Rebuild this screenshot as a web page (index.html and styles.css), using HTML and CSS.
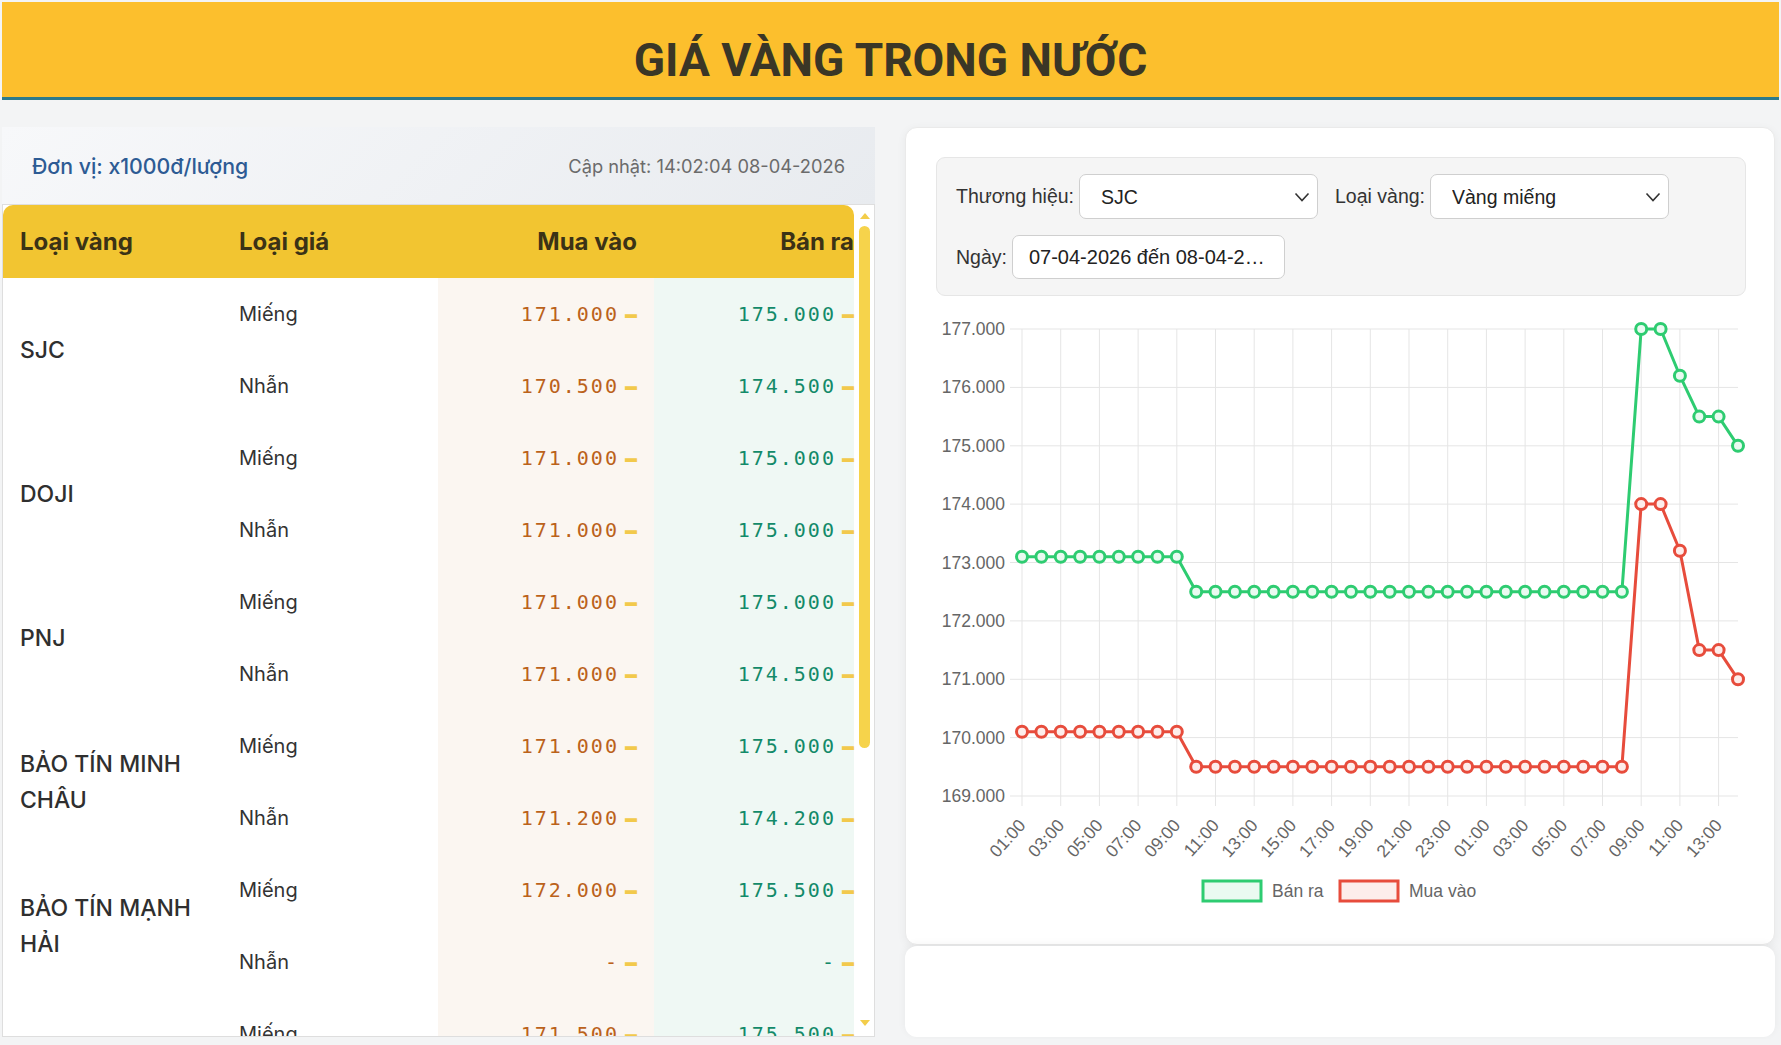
FILE: index.html
```html
<!DOCTYPE html>
<html lang="vi">
<head>
    <meta charset="UTF-8">
    <meta name="viewport" content="width=device-width, initial-scale=1.0">
    <title>Giá vàng trong nước</title>
    <link rel="stylesheet" href="styles.css">
</head>
<body>

<header class="site-header">
    <h1>GIÁ VÀNG TRONG NƯỚC</h1>
</header>

<main class="layout">
    <section class="price-panel">
        <div class="panel-top">
            <span class="unit">Đơn vị: x1000đ/lượng</span>
            <span class="updated">Cập nhật: 14:02:04 08-04-2026</span>
        </div>
        <div class="table-wrap">
            <div class="table-scroll">
                <table class="price-table">
                    <thead>
                        <tr>
                            <th class="col-brand">Loại vàng</th>
                            <th class="col-type">Loại giá</th>
                            <th class="col-buy">Mua vào</th>
                            <th class="col-sell">Bán ra</th>
                        </tr>
                    </thead>
                    <tbody>
                        <tr>
                            <td class="brand" rowspan="2">SJC</td>
                            <td>Miếng</td>
                            <td class="buy"><span class="num">171.000</span><span class="trend">–</span></td>
                            <td class="sell"><span class="num">175.000</span><span class="trend">–</span></td>
                        </tr>
                        <tr>
                            <td>Nhẫn</td>
                            <td class="buy"><span class="num">170.500</span><span class="trend">–</span></td>
                            <td class="sell"><span class="num">174.500</span><span class="trend">–</span></td>
                        </tr>
                        <tr>
                            <td class="brand" rowspan="2">DOJI</td>
                            <td>Miếng</td>
                            <td class="buy"><span class="num">171.000</span><span class="trend">–</span></td>
                            <td class="sell"><span class="num">175.000</span><span class="trend">–</span></td>
                        </tr>
                        <tr>
                            <td>Nhẫn</td>
                            <td class="buy"><span class="num">171.000</span><span class="trend">–</span></td>
                            <td class="sell"><span class="num">175.000</span><span class="trend">–</span></td>
                        </tr>
                        <tr>
                            <td class="brand" rowspan="2">PNJ</td>
                            <td>Miếng</td>
                            <td class="buy"><span class="num">171.000</span><span class="trend">–</span></td>
                            <td class="sell"><span class="num">175.000</span><span class="trend">–</span></td>
                        </tr>
                        <tr>
                            <td>Nhẫn</td>
                            <td class="buy"><span class="num">171.000</span><span class="trend">–</span></td>
                            <td class="sell"><span class="num">174.500</span><span class="trend">–</span></td>
                        </tr>
                        <tr>
                            <td class="brand" rowspan="2">BẢO TÍN MINH CHÂU</td>
                            <td>Miếng</td>
                            <td class="buy"><span class="num">171.000</span><span class="trend">–</span></td>
                            <td class="sell"><span class="num">175.000</span><span class="trend">–</span></td>
                        </tr>
                        <tr>
                            <td>Nhẫn</td>
                            <td class="buy"><span class="num">171.200</span><span class="trend">–</span></td>
                            <td class="sell"><span class="num">174.200</span><span class="trend">–</span></td>
                        </tr>
                        <tr>
                            <td class="brand" rowspan="2">BẢO TÍN MẠNH HẢI</td>
                            <td>Miếng</td>
                            <td class="buy"><span class="num">172.000</span><span class="trend">–</span></td>
                            <td class="sell"><span class="num">175.500</span><span class="trend">–</span></td>
                        </tr>
                        <tr>
                            <td>Nhẫn</td>
                            <td class="buy"><span class="num">-</span><span class="trend">–</span></td>
                            <td class="sell"><span class="num">-</span><span class="trend">–</span></td>
                        </tr>
                        <tr>
                            <td class="brand" rowspan="2">PHÚ QUÝ</td>
                            <td>Miếng</td>
                            <td class="buy"><span class="num">171.500</span><span class="trend">–</span></td>
                            <td class="sell"><span class="num">175.500</span><span class="trend">–</span></td>
                        </tr>
                        <tr>
                            <td>Nhẫn</td>
                            <td class="buy"><span class="num">171.000</span><span class="trend">–</span></td>
                            <td class="sell"><span class="num">174.500</span><span class="trend">–</span></td>
                        </tr>
                    </tbody>
                </table>
            </div>
            <div class="scrollbar">
                <span class="arrow-up"></span>
                <span class="scroll-track"><span class="scroll-thumb"></span></span>
                <span class="arrow-down"></span>
            </div>
        </div>
    </section>

    <section class="chart-column">
        <div class="chart-card">
            <div class="filters">
                <label class="field">
                    <span>Thương hiệu:</span>
                    <span class="select-box">
                        <select>
                            <option>SJC</option>
                            <option>DOJI</option>
                            <option>PNJ</option>
                        </select>
                        <svg width="16" height="10" viewBox="0 0 16 10"><path d="M1.5 1.5 L8 8.5 L14.5 1.5" fill="none" stroke="#333" stroke-width="1.6"/></svg>
                    </span>
                </label>
                <label class="field">
                    <span>Loại vàng:</span>
                    <span class="select-box">
                        <select>
                            <option>Vàng miếng</option>
                            <option>Vàng nhẫn</option>
                        </select>
                        <svg width="16" height="10" viewBox="0 0 16 10"><path d="M1.5 1.5 L8 8.5 L14.5 1.5" fill="none" stroke="#333" stroke-width="1.6"/></svg>
                    </span>
                </label>
                <label class="field">
                    <span>Ngày:</span>
                    <input class="date-input" type="text" value="07-04-2026 đến 08-04-2026" readonly>
                </label>
            </div>
            <svg id="priceChart" class="chart" width="810" height="610" viewBox="0 0 810 610"></svg>
        </div>
        <div class="extra-card"></div>
    </section>
</main>

<script>
    // hourly points, labels every second hour like the chart lib does
    const labels = [];
    for (let i = 0; i < 38; i++) {
        labels.push(String((i + 1) % 24).padStart(2, '0') + ':00');
    }
    const banRa = Array(9).fill(173.1).concat(Array(23).fill(172.5), [177, 177, 176.2, 175.5, 175.5, 175]);
    const muaVao = Array(9).fill(170.1).concat(Array(23).fill(169.5), [174, 174, 173.2, 171.5, 171.5, 171]);

    const chart = document.getElementById('priceChart');
    const plotLeft = 86, plotRight = 802, plotTop = 24, plotBottom = 491;
    const stepX = (plotRight - plotLeft) / (labels.length - 1);
    const unitY = (plotBottom - plotTop) / 8;
    const xAt = i => (plotLeft + i * stepX).toFixed(1);
    const yAt = v => (plotTop + (177 - v) * unitY).toFixed(1);

    let html = '';
    for (let v = 169; v <= 177; v++) {
        html += `<line class="grid" x1="74" y1="${yAt(v)}" x2="${plotRight}" y2="${yAt(v)}"/>`;
        html += `<text class="tick" x="69" y="${yAt(v)}" text-anchor="end" dominant-baseline="central">${v}.000</text>`;
    }
    labels.forEach((label, i) => {
        if (i % 2) return;
        html += `<line class="grid" x1="${xAt(i)}" y1="${plotTop}" x2="${xAt(i)}" y2="${plotBottom + 10}"/>`;
        html += `<text class="tick" transform="translate(${xAt(i)} ${plotBottom + 26}) rotate(-48)" text-anchor="end" dominant-baseline="central">${label}</text>`;
    });

    function series(values, color, fill) {
        const pts = values.map((v, i) => xAt(i) + ',' + yAt(v)).join(' ');
        let out = `<polyline points="${pts}" fill="none" stroke="${color}" stroke-width="3" stroke-linejoin="round"/>`;
        values.forEach((v, i) => {
            out += `<circle cx="${xAt(i)}" cy="${yAt(v)}" r="5.5" fill="${fill}" stroke="${color}" stroke-width="3"/>`;
        });
        return out;
    }
    html += series(banRa, '#2ecc71', '#eafaf1');
    html += series(muaVao, '#e74c3c', '#fdedeb');

    // legend
    html += `<rect x="267" y="576" width="58" height="20" fill="#eafaf1" stroke="#2ecc71" stroke-width="3"/>`;
    html += `<text class="tick" x="336" y="586" dominant-baseline="central">Bán ra</text>`;
    html += `<rect x="404" y="576" width="58" height="20" fill="#fdedeb" stroke="#e74c3c" stroke-width="3"/>`;
    html += `<text class="tick" x="473" y="586" dominant-baseline="central">Mua vào</text>`;
    chart.innerHTML = html;
</script>

</body>
</html>
```

FILE: styles.css
```css
* {
    box-sizing: border-box;
}
body {
    margin: 0;
    padding: 2px;
    background-color: #f3f4f5;
    font-family: Inter, "Noto Sans", sans-serif;
    color: #333;
}
.site-header {
    height: 98px;
    background-color: #fcbf2d;
    border-bottom: 3px solid #2b7a8b;
    display: flex;
    justify-content: center;
    align-items: center;
    padding-top: 21px;
}
.site-header h1 {
    margin: 0;
    font-family: Roboto, sans-serif;
    font-weight: 700;
    font-size: 46px;
    color: #3a3626;
}
.layout {
    display: grid;
    grid-template-columns: 873px 870px;
    gap: 30px;
    margin-top: 27px;
    height: 910px;
}

/* left: price table */
.price-panel {
    display: flex;
    flex-direction: column;
    min-height: 0;
}
.panel-top {
    height: 77px;
    flex-shrink: 0;
    display: flex;
    justify-content: space-between;
    align-items: center;
    padding: 0 30px;
    background: linear-gradient(135deg, #f7f8fa, #e8ebef);
}
.unit {
    color: #2d5b94;
    font-size: 21.3px;
    font-weight: 500;
}
.updated {
    color: #6b6b6b;
    font-size: 18.3px;
}
.table-wrap {
    position: relative;
    flex: 1;
    min-height: 0;
    background-color: #fff;
    border: 1px solid #dedede;
}
.table-scroll {
    height: 100%;
    overflow: hidden;
}
.scrollbar {
    position: absolute;
    top: 0;
    right: 0;
    bottom: 0;
    width: 16px;
    padding: 0 4px 0 1px;
    display: flex;
    flex-direction: column;
    align-items: center;
    background-color: #fff;
}
.arrow-up,
.arrow-down {
    width: 0;
    height: 0;
    border-left: 5px solid transparent;
    border-right: 5px solid transparent;
}
.arrow-up {
    margin: 8px 0 6px;
    border-bottom: 6px solid #f3cd4a;
}
.arrow-down {
    margin: 6px 0 10px;
    border-top: 6px solid #f3cd4a;
}
.scroll-track {
    flex: 1;
    width: 100%;
    padding-top: 1px;
}
.scroll-thumb {
    display: block;
    height: 522px;
    border-radius: 6px;
    background-color: #f6d34b;
}
.price-table {
    width: 851px;
    table-layout: fixed;
    border-collapse: separate;
    border-spacing: 0;
}
.price-table th {
    height: 73px;
    padding: 0 16px;
    background-color: #f2c531;
    color: #3b3216;
    font-size: 24px;
    font-weight: 700;
    text-align: left;
}
.col-brand {
    width: 220px;
    border-top-left-radius: 10px;
}
.price-table th.col-brand {
    padding-left: 17px;
}
.col-type {
    width: 215px;
}
.col-buy {
    width: 216px;
}
.col-sell {
    width: 200px;
    border-top-right-radius: 10px;
}
.price-table th.col-buy {
    text-align: right;
    padding-right: 17px;
}
.price-table th.col-sell {
    text-align: right;
    padding-right: 0;
}
.price-table td {
    height: 72px;
    padding: 0 16px;
    font-size: 20px;
    color: #333;
    vertical-align: middle;
}
.price-table td.brand {
    padding-left: 17px;
    font-size: 23px;
    font-weight: 500;
    line-height: 36px;
    color: #2f2f2f;
}
.price-table td.buy {
    background-color: #fbf6f1;
    text-align: right;
    padding-right: 17px;
}
.price-table td.sell {
    background-color: #eff8f4;
    text-align: right;
    padding-right: 0;
}
.num {
    font-family: "DejaVu Sans Mono", monospace;
    font-size: 20px;
    letter-spacing: 2px;
}
.buy .num {
    color: #bb621b;
}
.sell .num {
    color: #138a69;
}
.trend {
    display: inline-block;
    margin-left: 6px;
    font-family: "DejaVu Sans Mono", monospace;
    font-size: 20px;
    font-weight: 700;
    color: #f2c94c;
    transform: scaleY(1.5);
}

/* right: chart */
.chart-column {
    display: flex;
    flex-direction: column;
    gap: 1px;
}
.chart-card {
    height: 818px;
    flex-shrink: 0;
    background-color: #fff;
    border: 1px solid #eaeaea;
    border-radius: 12px;
    box-shadow: 0 2px 10px rgba(0, 0, 0, 0.05);
    padding: 29px 28px 0 30px;
}
.extra-card {
    flex: 1;
    background-color: #fff;
    border-radius: 12px;
    box-shadow: 0 -2px 8px rgba(0, 0, 0, 0.05);
}
.filters {
    display: flex;
    flex-wrap: wrap;
    gap: 16px 17px;
    padding: 16px 19px;
    background-color: #f5f5f5;
    border: 1px solid #e6e6e6;
    border-radius: 9px;
    font-family: "Liberation Sans", Arial, sans-serif;
    font-size: 19.5px;
    color: #333;
}
.field {
    display: flex;
    align-items: center;
    gap: 5px;
}
.select-box {
    position: relative;
    display: block;
}
.select-box select {
    appearance: none;
    width: 239px;
    height: 45px;
    padding: 0 40px 0 21px;
    border: 1px solid #cfcfcf;
    border-radius: 7px;
    background-color: #fff;
    font: inherit;
    color: #222;
}
.select-box svg {
    position: absolute;
    right: 8px;
    top: 50%;
    margin-top: -5px;
    pointer-events: none;
}
.date-input {
    width: 273px;
    height: 44px;
    padding: 0 12px 0 16px;
    border: 1px solid #cfcfcf;
    border-radius: 7px;
    background-color: #fff;
    font: inherit;
    font-size: 20px;
    color: #222;
    text-overflow: ellipsis;
}
.chart {
    display: block;
    margin-top: 9px;
}
.chart .grid {
    stroke: #e5e5e5;
    stroke-width: 1;
}
.chart .tick {
    font-family: "Liberation Sans", Arial, sans-serif;
    font-size: 17.5px;
    fill: #666;
}
```
